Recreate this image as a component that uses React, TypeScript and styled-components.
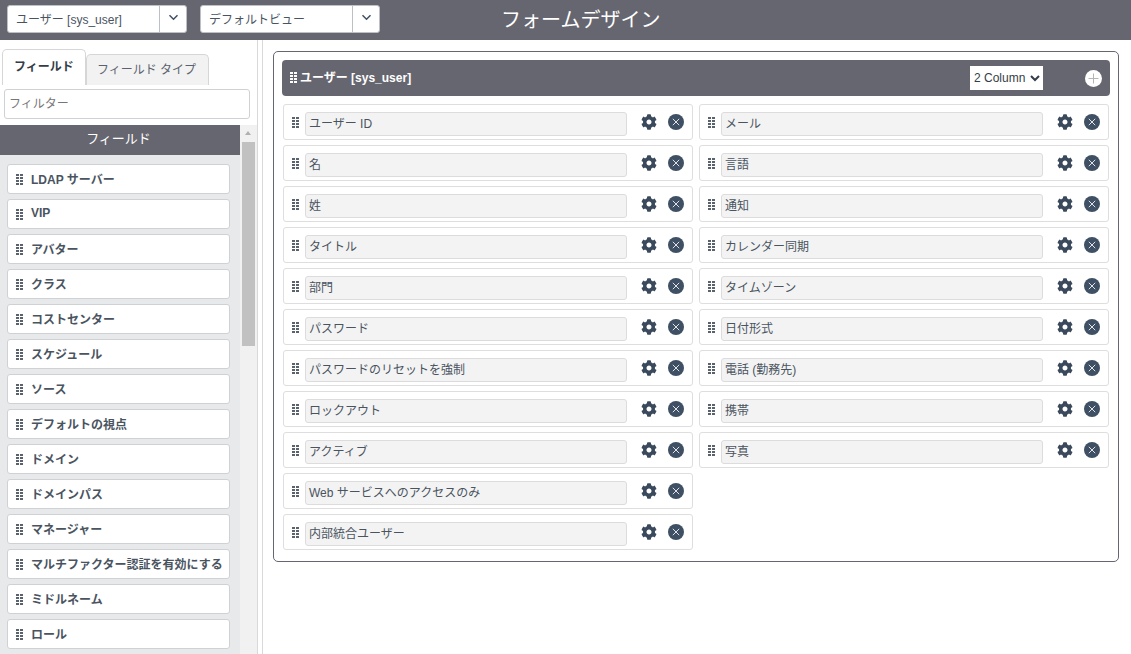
import React from 'react';
import styled, { createGlobalStyle } from 'styled-components';
import { FaCog } from 'react-icons/fa';

const GlobalStyle = createGlobalStyle`
	html, body {
		margin: 0;
		padding: 0;
		height: 100%;
		overflow: hidden;
		background: #fff;
		font-family: "Liberation Sans", "Noto Sans CJK JP", sans-serif;
		color: #343d47;
	}
	* { box-sizing: border-box; }
`;

const Page = styled.div`
	width: 1131px;
	height: 654px;
	display: flex;
	flex-direction: column;
	overflow: hidden;
`;

const TopBar = styled.header`
	flex: none;
	height: 40px;
	background: #666670;
	display: flex;
	align-items: center;
	padding: 0 0 2px 7px;
`;

const Picker = styled.div`
	width: 180px;
	height: 28px;
	margin-right: 13px;
	background: #fff;
	border: 1px solid #bdc0c4;
	border-radius: 3px;
	display: flex;
	align-items: center;
	font-size: 12px;
	color: #4a545f;
`;

const PickerText = styled.span`
	flex: 1;
	padding: 0 0 2px 8px;
`;

const PickerButton = styled.span`
	width: 27px;
	height: 26px;
	padding-bottom: 3px;
	border-left: 1px solid #bdc0c4;
	display: flex;
	align-items: center;
	justify-content: center;
	color: #3f5064;
`;

const Title = styled.h1`
	margin: 0 0 0 108px;
	font-size: 20px;
	font-weight: 400;
	color: #fff;
	padding-bottom: 2px;
`;

const Body = styled.div`
	flex: 1;
	min-height: 0;
	display: flex;
`;

const Sidebar = styled.aside`
	flex: none;
	width: 258px;
	border-right: 1px solid #d9d9d9;
	display: flex;
	flex-direction: column;
	padding-top: 9px;
`;

const Tabs = styled.div`
	flex: none;
	height: 36px;
	padding-left: 2px;
	display: flex;
	align-items: flex-end;
`;

const Tab = styled.div<{ $active?: boolean }>`
	height: ${(p) => (p.$active ? '36px' : '31px')};
	width: ${(p) => (p.$active ? '84px' : '123px')};
	padding-top: ${(p) => (p.$active ? '7px' : '5px')};
	padding-right: ${(p) => (p.$active ? '0' : '2px')};
	text-align: center;
	font-size: 12px;
	font-weight: ${(p) => (p.$active ? 700 : 400)};
	color: ${(p) => (p.$active ? '#343d47' : '#5a636d')};
	background: ${(p) => (p.$active ? '#fff' : '#f2f2f2')};
	border: 1px solid #d6d6d6;
	border-bottom: 0;
	border-radius: 5px 5px 0 0;
`;

const FilterInput = styled.input`
	flex: none;
	display: block;
	width: 246px;
	height: 30px;
	margin: 4px 0 6px 4px;
	padding: 0 4px;
	border: 1px solid #cfd2d5;
	border-radius: 3px;
	font: inherit;
	font-size: 12px;
	&::placeholder { color: #777; opacity: 1; }
`;

const ListArea = styled.div`
	flex: 1;
	min-height: 0;
	display: flex;
`;

const ListColumn = styled.div`
	width: 240px;
	background: #e8e9ea;
	overflow: hidden;
`;

const SectionHead = styled.div`
	height: 30px;
	background: #666670;
	color: #fff;
	font-size: 13px;
	padding: 0 3px 5px 0;
	display: flex;
	align-items: center;
	justify-content: center;
`;

const FieldList = styled.div`
	padding: 9px 10px 0 7px;
	display: flex;
	flex-direction: column;
	gap: 5px;
`;

const FieldChip = styled.div`
	height: 30px;
	flex: none;
	background: #fff;
	border: 1px solid #cfd2d5;
	border-radius: 3px;
	display: flex;
	align-items: center;
	gap: 8px;
	padding: 0 0 2px 8px;
	font-size: 12px;
	font-weight: 700;
	color: #4a545f;
	white-space: nowrap;
`;

const ChipGrip = styled.span`
	display: block;
	line-height: 0;
	margin-top: 3px;
`;

const ScrollTrack = styled.div`
	width: 17px;
	background: #f1f1f1;
	padding: 17px 2px 0;
	position: relative;
	&::before {
		content: '';
		position: absolute;
		top: 6px;
		left: 5px;
		border: 3.5px solid transparent;
		border-top: 0;
		border-bottom: 4px solid #b0b0b0;
	}
`;

const ScrollThumb = styled.div`
	height: 204px;
	background: #c1c1c1;
`;

const Splitter = styled.div`
	flex: none;
	width: 5px;
	border-right: 1px solid #d9d9d9;
`;

const Canvas = styled.main`
	flex: 1;
	min-width: 0;
	padding: 11px 12px 0 10px;
`;

const FormSection = styled.section`
	height: 511px;
	border: 1px solid #666670;
	border-radius: 5px;
	padding: 8px 8px 0 8px;
`;

const SectionBar = styled.div`
	height: 36px;
	background: #666670;
	border-radius: 4px;
	display: flex;
	align-items: center;
	padding: 0 8px;
	color: #fff;
	font-size: 12px;
	font-weight: 700;
	gap: 3px;
`;

const SectionName = styled.span`
	flex: 1;
	padding-bottom: 3px;
`;

const ColumnSelect = styled.select`
	width: 73px;
	height: 24px;
	margin-right: 39px;
	border: 0;
	border-radius: 0;
	background: #fff;
	color: #343d47;
	font: inherit;
	font-weight: 400;
	font-size: 12px;
	padding: 0;
`;

const AddButton = styled.span`
	width: 17px;
	height: 17px;
	display: block;
	line-height: 0;
`;

const FieldGrid = styled.div`
	display: grid;
	grid-template-columns: 410px 410px;
	gap: 5px 6px;
	margin: 8px 0 0 1px;
	align-items: start;
`;

const Column = styled.div`
	display: flex;
	flex-direction: column;
	gap: 5px;
`;

const Row = styled.div`
	height: 36px;
	border: 1px solid #dedede;
	border-radius: 3px;
	display: flex;
	align-items: center;
	padding: 4px 0 0 8px;
`;

const RowGrip = styled.span`
	display: block;
	line-height: 0;
	margin: -3px 6px 0 0;
`;

const RowLabel = styled.div`
	width: 322px;
	height: 24px;
	background: #f3f3f3;
	border: 1px solid #dcdcdc;
	border-radius: 3px;
	padding: 0 0 4px 3px;
	font-size: 12px;
	color: #4a545f;
	display: flex;
	align-items: center;
	margin-right: 14px;
`;

const GearIcon = styled(FaCog)`
	display: block;
	width: 16px;
	height: 16px;
	color: #3a4a5c;
	margin: -5px 11px 0 0;
`;

const CloseIcon = styled.span`
	display: block;
	line-height: 0;
	margin-top: -5px;
`;

const Grip = ({ color = '#5a636d' }: { color?: string }) => (
	<svg width="7" height="12" viewBox="0 0 7 12">
		{[0, 3, 6, 9].map((y) => (
			<g key={y} fill={color}>
				<rect x="0" y={y} width="3" height="2" />
				<rect x="4" y={y} width="3" height="2" />
			</g>
		))}
	</svg>
);

const Chevron = () => (
	<svg width="11" height="7" viewBox="0 0 11 7">
		<path d="M1.5 1.2 5.5 5.2 9.5 1.2" fill="none" stroke="currentColor" strokeWidth="1.5" />
	</svg>
);

const Close = () => (
	<svg width="16" height="16" viewBox="0 0 16 16">
		<circle cx="8" cy="8" r="8" fill="#3f5064" />
		<path d="M4.8 4.8 11.2 11.2M11.2 4.8 4.8 11.2" stroke="#dfe4e8" strokeWidth="1" />
	</svg>
);

const Plus = () => (
	<svg width="17" height="17" viewBox="0 0 17 17">
		<circle cx="8.5" cy="8.5" r="8.5" fill="#fff" />
		<path d="M8.5 3.5V13.5M3.5 8.5H13.5" stroke="#b5b5b5" strokeWidth="1" />
	</svg>
);

const available = [
	'LDAP サーバー',
	'VIP',
	'アバター',
	'クラス',
	'コストセンター',
	'スケジュール',
	'ソース',
	'デフォルトの視点',
	'ドメイン',
	'ドメインパス',
	'マネージャー',
	'マルチファクター認証を有効にする',
	'ミドルネーム',
	'ロール',
];

const leftFields = [
	'ユーザー ID',
	'名',
	'姓',
	'タイトル',
	'部門',
	'パスワード',
	'パスワードのリセットを強制',
	'ロックアウト',
	'アクティブ',
	'Web サービスへのアクセスのみ',
	'内部統合ユーザー',
];

const rightFields = [
	'メール',
	'言語',
	'通知',
	'カレンダー同期',
	'タイムゾーン',
	'日付形式',
	'電話 (勤務先)',
	'携帯',
	'写真',
];

const FieldRow = ({ label }: { label: string }) => (
	<Row>
		<RowGrip><Grip /></RowGrip>
		<RowLabel>{label}</RowLabel>
		<GearIcon />
		<CloseIcon><Close /></CloseIcon>
	</Row>
);

const App = () => (
	<Page>
		<GlobalStyle />
		<TopBar>
			<Picker>
				<PickerText>ユーザー [sys_user]</PickerText>
				<PickerButton><Chevron /></PickerButton>
			</Picker>
			<Picker>
				<PickerText>デフォルトビュー</PickerText>
				<PickerButton><Chevron /></PickerButton>
			</Picker>
			<Title>フォームデザイン</Title>
		</TopBar>
		<Body>
			<Sidebar>
				<Tabs>
					<Tab $active>フィールド</Tab>
					<Tab>フィールド タイプ</Tab>
				</Tabs>
				<FilterInput placeholder="フィルター" />
				<ListArea>
					<ListColumn>
						<SectionHead>フィールド</SectionHead>
						<FieldList>
							{available.map((name) => (
								<FieldChip key={name}>
									<ChipGrip><Grip /></ChipGrip>
									{name}
								</FieldChip>
							))}
						</FieldList>
					</ListColumn>
					<ScrollTrack><ScrollThumb /></ScrollTrack>
				</ListArea>
			</Sidebar>
			<Splitter />
			<Canvas>
				<FormSection>
					<SectionBar>
						<Grip color="#fff" />
						<SectionName>ユーザー [sys_user]</SectionName>
						<ColumnSelect defaultValue="2">
							<option value="1">1 Column</option>
							<option value="2">2 Column</option>
							<option value="3">3 Column</option>
						</ColumnSelect>
						<AddButton><Plus /></AddButton>
					</SectionBar>
					<FieldGrid>
						<Column>
							{leftFields.map((f) => <FieldRow key={f} label={f} />)}
						</Column>
						<Column>
							{rightFields.map((f) => <FieldRow key={f} label={f} />)}
						</Column>
					</FieldGrid>
				</FormSection>
			</Canvas>
		</Body>
	</Page>
);

export default App;
